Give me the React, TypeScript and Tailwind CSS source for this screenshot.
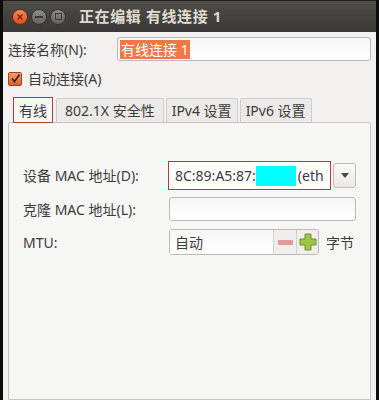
import React from "react";

const font = { fontFamily: '"Noto Sans", "Noto Sans CJK SC", sans-serif' };

export default function App() {
  return (
    <div className="w-[379px] h-[400px] overflow-hidden bg-[#0c0c0c] flex flex-col pl-[3px] pr-[3px] text-[14px] text-[#3c3c3c]" style={font}>
      {/* title bar */}
      <div className="h-[32px] shrink-0 flex items-center bg-gradient-to-b from-[#4e4d48] to-[#3a3935] border-t border-[#222]">
        <div className="flex items-center gap-[3px] pl-[9px]">
          <div className="w-[16px] h-[16px] rounded-full bg-gradient-to-b from-[#f58a5a] to-[#df4b16] border border-[#7a2a10] flex items-center justify-center">
            <svg width="8" height="8" viewBox="0 0 8 8"><path d="M1.5 1.5 L6.5 6.5 M6.5 1.5 L1.5 6.5" stroke="#6b2a12" strokeWidth="1.4" /></svg>
          </div>
          <div className="w-[16px] h-[16px] rounded-full bg-gradient-to-b from-[#8d8c86] to-[#64635e] border border-[#34332f] flex items-center justify-center">
            <div className="w-[8px] h-[2px] bg-[#3a3935]" />
          </div>
          <div className="w-[16px] h-[16px] rounded-full bg-gradient-to-b from-[#8d8c86] to-[#64635e] border border-[#34332f] flex items-center justify-center">
            <div className="w-[7px] h-[7px] border border-[#3a3935]" />
          </div>
        </div>
        <div className="ml-[13px] text-[15px] font-bold text-[#dfdbd2] tracking-[0.6px]">正在编辑 有线连接 1</div>
      </div>

      {/* body */}
      <div className="flex-1 bg-[#f2f1f0] flex flex-col px-[5px]">
        <div className="flex items-center mt-[5px] h-[24px]">
          <div className="w-[109px] pt-[1px]">连接名称(N):</div>
          <div className="flex-1 h-[24px] rounded-[3px] border border-[#b9b7b3] bg-gradient-to-b from-[#f4f4f4] to-[#ffffff] flex items-center pl-[2px]">
            <span className="bg-[#f07746] text-white px-[1px] h-[19px] leading-[19px]">有线连接 1</span>
          </div>
        </div>

        <div className="flex items-center mt-[10px] h-[15px]">
          <div className="w-[14px] h-[14px] rounded-[2px] bg-gradient-to-b from-[#f39a6e] to-[#e0612c] border border-[#a5441a] flex items-center justify-center">
            <svg width="11" height="11" viewBox="0 0 11 11"><path d="M2 5.5 L4.5 8.5 L9.5 1.5" fill="none" stroke="#4a2414" strokeWidth="1.8" /></svg>
          </div>
          <div className="ml-[6px]">自动连接(A)</div>
        </div>

        {/* tabs */}
        <div className="flex items-end mt-[10px] h-[26px] pl-[5px]">
          <div className="h-[26px] px-[5px] border-[1.5px] border-[#b23a3a] bg-[#f6f6f5] flex items-center relative z-10 -mb-[1px]">有线</div>
          <div className="ml-[3px] h-[24px] px-[8px] border border-b-0 border-[#d0ceca] bg-[#ebeae8] rounded-t-[2px] flex items-center">802.1X 安全性</div>
          <div className="ml-[2px] h-[24px] px-[5px] border border-b-0 border-[#d0ceca] bg-[#ebeae8] rounded-t-[2px] flex items-center">IPv4 设置</div>
          <div className="ml-[2px] h-[24px] px-[5px] border border-b-0 border-[#d0ceca] bg-[#ebeae8] rounded-t-[2px] flex items-center">IPv6 设置</div>
        </div>

        {/* panel */}
        <div className="flex-1 border border-[#c6c4c0] rounded-t-[2px] bg-[#f6f6f5] flex flex-col pt-[38px] pl-[14px]">
          <div className="flex items-center h-[29px]">
            <div className="w-[145px]">设备 MAC 地址(D):</div>
            <div className="flex items-center">
              <div className="w-[163px] h-[29px] border-[1.5px] border-[#b23a3a] bg-white flex items-center pl-[6px] overflow-hidden whitespace-nowrap">
                <span>8C:89:A5:87:</span>
                <span className="inline-block w-[40px] h-[20px] bg-[#00ffff]" />
                <span className="ml-[2px]">(eth</span>
              </div>
              <div className="ml-[2px] w-[23px] h-[25px] rounded-[3px] border border-[#c9b9b4] bg-gradient-to-b from-[#fafafa] to-[#e9e8e6] flex items-center justify-center">
                <svg width="8" height="5" viewBox="0 0 8 5"><path d="M0 0 L8 0 L4 5 Z" fill="#4a4a4a" /></svg>
              </div>
            </div>
          </div>

          <div className="flex items-center h-[24px] mt-[7px]">
            <div className="w-[146px]">克隆 MAC 地址(L):</div>
            <div className="w-[187px] h-[24px] rounded-[3px] border border-[#bcbab6] bg-gradient-to-b from-[#f5f5f5] to-[#ffffff]" />
          </div>

          <div className="flex items-center h-[26px] mt-[8px]">
            <div className="w-[146px]">MTU:</div>
            <div className="w-[150px] h-[26px] rounded-[3px] border border-[#bcbab6] bg-white flex">
              <div className="flex-1 flex items-center pl-[5px] bg-gradient-to-b from-[#f5f5f5] to-[#ffffff]">自动</div>
              <div className="w-[23px] border-l border-[#d3d1ce] bg-[#efeeed] flex items-center justify-center">
                <div className="w-[15px] h-[5px] bg-[#e29a9a] rounded-[1px]" />
              </div>
              <div className="w-[22px] border-l border-[#d3d1ce] bg-[#efeeed] flex items-center justify-center">
                <svg width="18" height="18" viewBox="0 0 18 18">
                  <path d="M6 1 H12 V6 H17 V12 H12 V17 H6 V12 H1 V6 H6 Z" fill="#9cc644" stroke="#6f8f2a" strokeWidth="1" />
                </svg>
              </div>
            </div>
            <div className="ml-[7px]">字节</div>
          </div>
        </div>
      </div>
    </div>
  );
}
